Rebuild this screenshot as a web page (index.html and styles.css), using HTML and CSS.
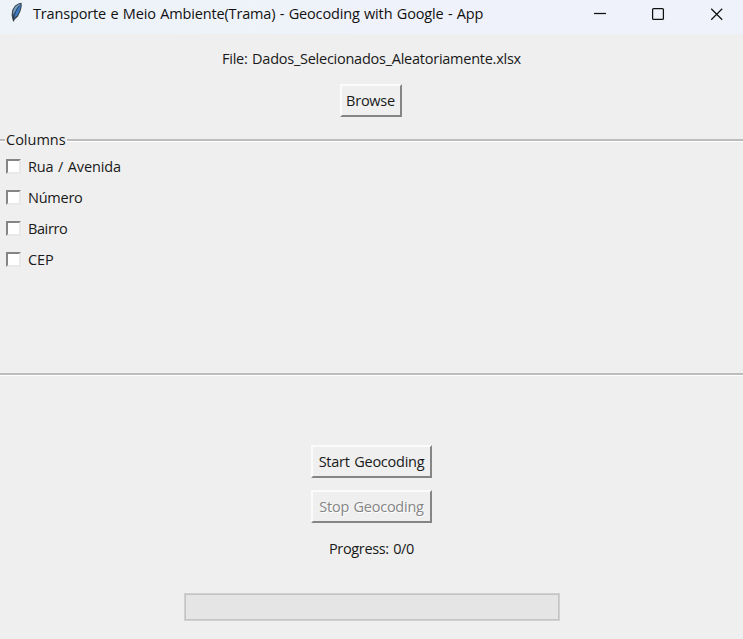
FILE: index.html
```html
<!DOCTYPE html>
<html lang="pt-BR">
<head>
<meta charset="utf-8">
<title>Geocoding with Google</title>
<link rel="stylesheet" href="styles.css">
</head>
<body>
<header class="titlebar">
  <svg class="feather" viewBox="0 0 14 22" width="14" height="22">
    <path d="M12.6 1.8 10 2.2 6 4.5 3.2 9 2.6 14 3.2 17.5 4.4 21 5.8 18.5 9 15.5 11.6 10 12.8 5Z" fill="#3b4653"/>
    <path d="M11.6 3 9.5 3.4 6.4 5.5 4.3 9.5 3.8 14Z" fill="#7d9dbd"/>
    <path d="M11.6 3 11.5 6 10 11 8 14.6 5.2 16.8 5 13 7.4 7.5Z" fill="#3d7cc4"/>
    <path d="M10 5 6.5 11 4.8 16 4.4 20" fill="none" stroke="#263445" stroke-width=".8"/>
  </svg>
  <h1 class="title">Transporte e Meio Ambiente(Trama) - Geocoding with Google - App</h1>
  <svg class="controls" viewBox="0 0 130 14" width="130" height="14" fill="none" stroke="#111" stroke-width="1.25">
    <path d="M0 6.5H12"/>
    <rect x="58.6" y="1.6" width="10.8" height="10.8" rx="1"/>
    <path d="M117.2 1.7 128.2 12.7M128.2 1.7 117.2 12.7"/>
  </svg>
</header>
<main class="app">
  <p class="file"><span class="file-text">File: Dados_Selecionados_Aleatoriamente.xlsx</span></p>
  <button class="button browse"><span class="browse-text">Browse</span></button>
  <section class="group">
    <h2 class="legend"><span class="legend-text">Columns</span></h2>
    <label class="check"><i class="box"></i><span class="rua">Rua / Avenida</span></label>
    <label class="check"><i class="box"></i><span class="numero">Número</span></label>
    <label class="check"><i class="box"></i><span class="bairro">Bairro</span></label>
    <label class="check"><i class="box"></i><span class="cep">CEP</span></label>
  </section>
  <button class="button start"><span class="start-text">Start Geocoding</span></button>
  <button class="button stop" disabled><span class="stop-text">Stop Geocoding</span></button>
  <p class="progress"><span class="progress-text">Progress: 0/0</span></p>
  <div class="bar"></div>
</main>
</body>
</html>
```
FILE: styles.css
```css
* { box-sizing: border-box; }
body {
  margin: 0;
  width: 743px;
  height: 639px;
  overflow: hidden;
  background: #efefef;
  color: #191919;
  font: 14.5px/20px "Open Sans", "Noto Sans", sans-serif;
  letter-spacing: -.25px;
}
h1, h2, p { margin: 0; font: inherit; }
span { white-space: nowrap; }
.titlebar {
  display: flex;
  align-items: flex-start;
  height: 34px;
  padding-left: 9px;
  background: linear-gradient(90deg, #edf3f8, #eff2fa 50%);
}
.feather { margin-top: 1px; }
.title {
  width: 571px;
  padding: 4px 0 0 10px;
  color: #111;
  white-space: nowrap;
  letter-spacing: -.15px;
  word-spacing: .75px;
}
.controls { margin-top: 7px; flex: none; }
.app { display: flex; flex-direction: column; align-items: center; }
.file { margin-top: 15px; }
.file-text { letter-spacing: -.25px; word-spacing: 1px; }
.button {
  display: flex;
  align-items: center;
  justify-content: center;
  height: 33px;
  padding: 0;
  background: #efefef;
  border: 2px solid;
  border-color: #fbfbfb #858585 #858585 #fbfbfb;
  color: inherit;
  font: inherit;
  letter-spacing: inherit;
}
.browse { width: 62px; margin: 15px 2px 0 0; }
.group {
  align-self: stretch;
  height: 236px;
  margin-top: 22px;
  border-top: 2px solid #bdbdbd;
  border-bottom: 2px solid #bdbdbd;
  box-shadow: 0 1px #fff, inset 0 1px #fff;
}
.legend {
  width: 62px;
  height: 21px;
  margin: -11px 0 0 5px;
  padding-left: 1px;
  background: #efefef;
  letter-spacing: 0;
}
.check { display: flex; align-items: center; height: 31px; padding-left: 6px; }
.rua { letter-spacing: -.15px; word-spacing: 1px; }
.bairro { letter-spacing: -.4px; }
.cep { letter-spacing: -.1px; }
.box {
  width: 15px;
  height: 15px;
  margin-right: 7px;
  background: #fff;
  border: 2px solid;
  border-color: #858585 #e9e9e9 #e9e9e9 #858585;
}
.start { width: 121px; margin-top: 70px; word-spacing: 1px; }
.stop { width: 121px; margin-top: 12px; color: #858585; text-shadow: 1px 1px #fff; word-spacing: 1px; }
.progress { margin-top: 16px; letter-spacing: -.35px; word-spacing: 1px; }
.bar {
  width: 376px;
  height: 28px;
  margin-top: 34px;
  background: #e5e5e5;
  border: 1px solid #d0d0d0;
  box-shadow: inset 0 0 0 1px #c4c4c4;
}
```
